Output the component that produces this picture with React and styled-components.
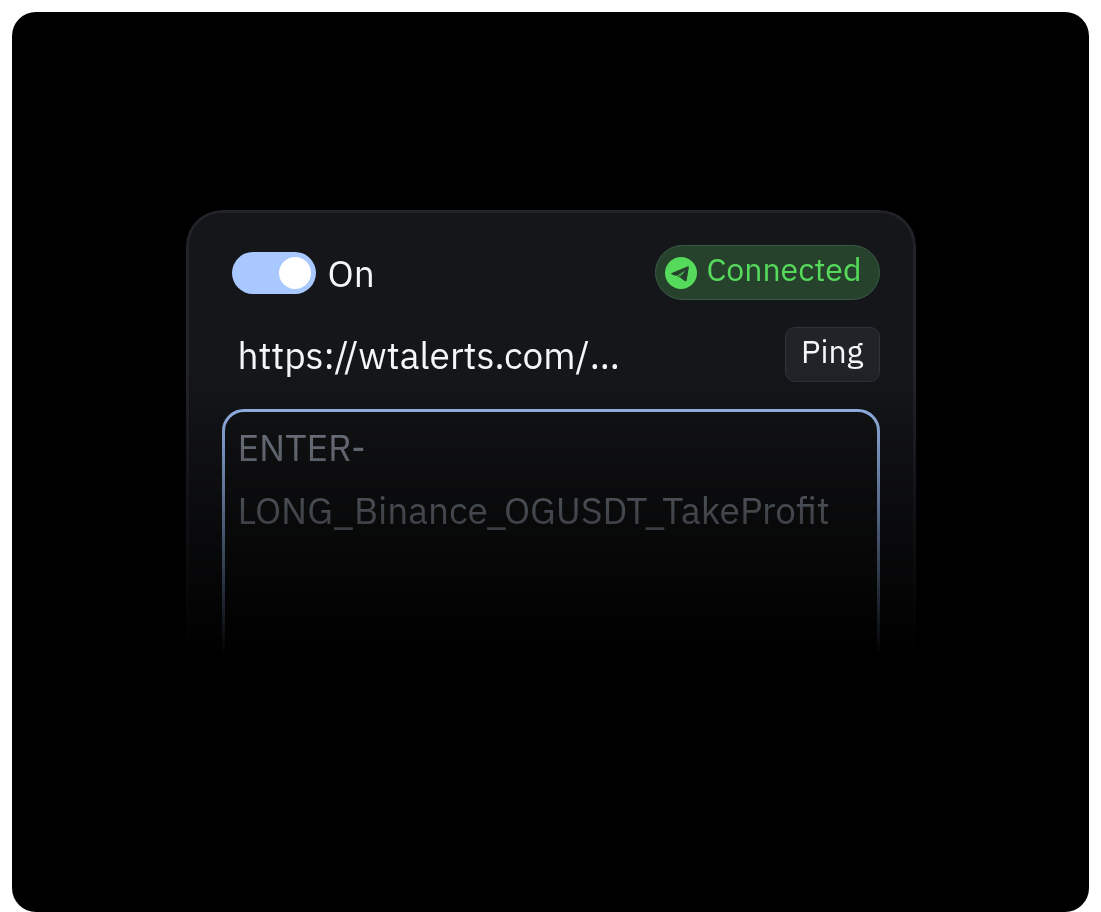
import React, { useState } from 'react'
import styled, { createGlobalStyle } from 'styled-components'

const GlobalStyle = createGlobalStyle`
  * {
    box-sizing: border-box;
  }
  body {
    margin: 0;
    background: #ffffff;
    font-family: 'IBM Plex Sans', Roboto, 'Noto Sans', sans-serif;
  }
`

const Page = styled.main`
  display: flex;
  min-height: 100vh;
  padding: 12px 12px 0;
`

const Stage = styled.section`
  flex: 1;
  display: flex;
  justify-content: center;
  align-items: flex-start;
  padding: 198px 24px 0;
  border-radius: 24px;
  background: #000000;
`

const Card = styled.div`
  display: flex;
  flex-direction: column;
  width: 100%;
  max-width: 730px;
  padding: 32px 33px 36px 33px;
  border: 3px solid #212329;
  border-radius: 36px;
  background: #15161a;
  /* the card fades out towards the bottom */
  mask-image: linear-gradient(to bottom, #000 160px, transparent 446px);
`

const Row = styled.div`
  display: flex;
  align-items: center;
  justify-content: space-between;
  padding-left: ${props => props.$indent};
  margin-bottom: 27px;
`

const ToggleLabel = styled.label`
  display: flex;
  align-items: center;
  gap: 12px;
  font-size: 37px;
  line-height: 44px;
  color: #f5f6f8;
  cursor: pointer;
`

const Toggle = styled.input`
  appearance: none;
  display: flex;
  align-items: center;
  justify-content: ${props => (props.checked ? 'flex-end' : 'flex-start')};
  width: 84px;
  height: 42px;
  margin: 0;
  padding: 0 5px;
  border-radius: 21px;
  background: ${props => (props.checked ? '#a8c8ff' : '#3a3d45')};
  cursor: pointer;

  &::before {
    content: '';
    width: 32px;
    height: 32px;
    border-radius: 50%;
    background: #ffffff;
  }
`

const Status = styled.div`
  display: flex;
  align-items: center;
  gap: 9px;
  height: 55px;
  padding: 0 17px 0 9px;
  border: 1px solid #3a5a45;
  border-radius: 28px;
  background: #26422c;
  font-size: 32px;
  line-height: 40px;
  color: #56da5c;

  span {
    padding-bottom: 7px;
  }
`

const Url = styled.span`
  font-size: 37px;
  line-height: 44px;
  color: #f5f6f8;
`

const PingButton = styled.button`
  height: 55px;
  padding: 0 15px 7px;
  border: 1px solid #2f343a;
  border-radius: 10px;
  background: #202327;
  font-family: inherit;
  font-size: 32px;
  line-height: 40px;
  color: #f5f6f8;
  cursor: pointer;
`

const Message = styled.textarea`
  display: block;
  width: 100%;
  height: 276px;
  padding: 4px 13px;
  border: 3px solid #a3c6ff;
  border-radius: 22px;
  outline: none;
  resize: none;
  overflow: hidden;
  background: #131416;
  font-family: inherit;
  font-size: 37px;
  line-height: 63px;
  color: #848c99;
`

const TelegramIcon = () => (
  <svg width='32' height='32' viewBox='0 0 32 32' aria-hidden='true'>
    <circle cx='16' cy='16' r='16' fill='#56da5c' />
    <path
      d='M6.8 16.1 L22.4 9.4 Q24 9 23.8 10.6 L21.7 23.2 Q21.2 25 19.7 24 L14.6 20.3 L20.4 13.6 L11.9 18.9 L6.8 17.5 Q5.4 16.8 6.8 16.1 Z'
      fill='#26422c'
    />
    <path d='M12.9 19.6 L17.6 15.9 L13.6 20.6 Z' fill='#26422c' />
  </svg>
)

const App = () => {
  const [enabled, setEnabled] = useState(true)
  const [message, setMessage] = useState(
    'ENTER-LONG_Binance_OGUSDT_TakeProfit'
  )

  return (
    <>
      <GlobalStyle />
      <Page>
        <Stage>
          <Card>
            <Row $indent='10px'>
              <ToggleLabel>
                <Toggle
                  type='checkbox'
                  role='switch'
                  checked={enabled}
                  onChange={e => setEnabled(e.target.checked)}
                />
                {enabled ? 'On' : 'Off'}
              </ToggleLabel>
              <Status>
                <TelegramIcon />
                <span>Connected</span>
              </Status>
            </Row>
            <Row $indent='16px'>
              <Url>https://wtalerts.com/...</Url>
              <PingButton type='button'>Ping</PingButton>
            </Row>
            <Message
              aria-label='Alert message'
              spellCheck={false}
              value={message}
              onChange={e => setMessage(e.target.value)}
            />
          </Card>
        </Stage>
      </Page>
    </>
  )
}

export default App
